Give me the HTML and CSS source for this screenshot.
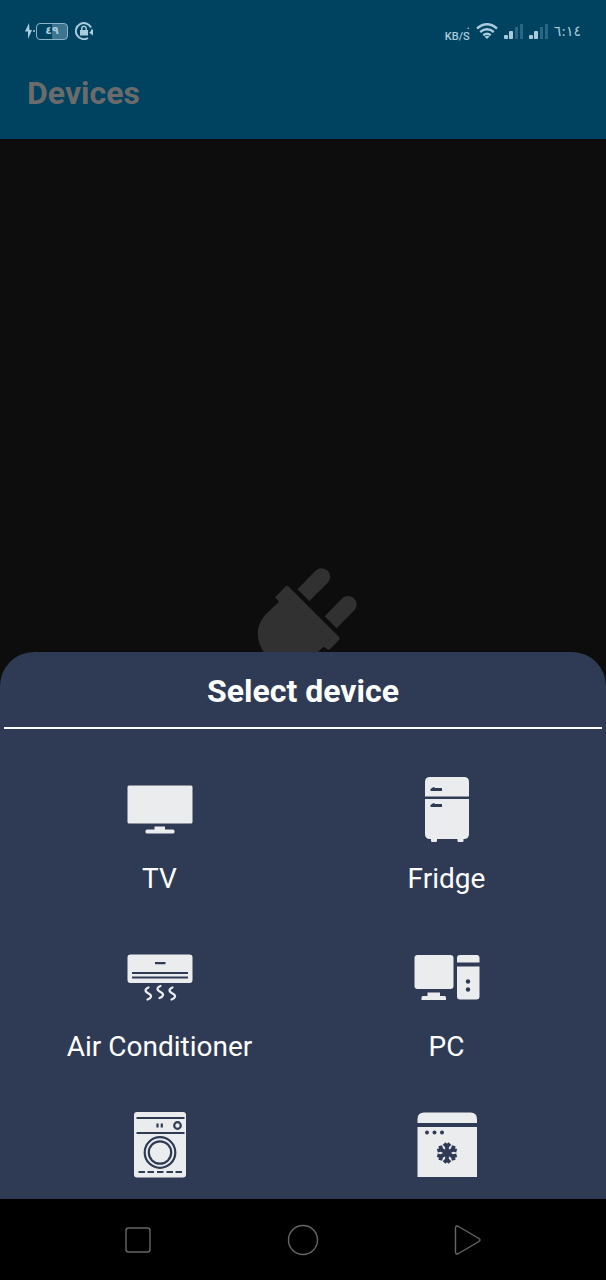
FILE: index.html
```html
<!DOCTYPE html>
<html lang="en">
<head>
<meta charset="utf-8">
<meta name="viewport" content="width=device-width, initial-scale=1">
<title>Devices</title>
<link rel="stylesheet" href="styles.css">
</head>
<body>
<div class="screen">
  <header class="top">
    <div class="status">
      <div class="status-group">
        <svg class="bolt" width="12" height="18" viewBox="0 0 12 18"><path d="M5 1 L1 9.5 H4 L4 17 L8 8 H5.500Z"/><circle cx="10" cy="9" r="1"/></svg>
        <span class="battery">٤٩</span>
        <svg class="lock" width="18" height="18" viewBox="0 0 18 18"><path class="arc" d="M13 16 A8 8 0 1 1 16 5.500"/><path class="arc" d="M17 7.500V11.500L14.800 10"/><path d="M5 8h8v5.500H5z"/><path class="arc thin" d="M6.800 8V6.500a2.200 2.200 0 0 1 4.400 0V8"/></svg>
      </div>
      <div class="status-group right">
        <span class="speed"><span>.</span><span>KB/S</span></span>
        <svg class="wifi" width="22" height="17" viewBox="0 0 22 17"><path d="M1 5.500Q11-2.800 21 5.500M4.200 9Q11 3.500 17.800 9M7.300 12.200Q11 9.300 14.700 12.200"/><path class="fill" d="M8.500 13.500Q11 12 13.500 13.500L11 16Z"/></svg>
        <svg class="signal" width="19" height="16" viewBox="0 0 19 16"><rect y="12" width="4" height="4" rx="1"/><rect x="5" y="8" width="4" height="8" rx="1"/><path class="weak" d="M11 4h3v12h-3zM16 1h3v15h-3z"/></svg>
        <svg class="signal" width="19" height="16" viewBox="0 0 19 16"><rect y="12" width="4" height="4" rx="1"/><rect x="5" y="8" width="4" height="8" rx="1"/><path class="weak" d="M11 4h3v12h-3zM16 1h3v15h-3z"/></svg>
        <time class="clock">٦:١٤</time>
      </div>
    </div>
    <h1 class="title">Devices</h1>
  </header>

  <main class="content">
    <svg class="plug" width="110" height="202" viewBox="248 568 110 202">
      <path d="M297.500 589.300L315.700 570.500A8.600 8.600 0 0 1 328 582.500L309.300 601ZM324.700 616.300L343 597.500A8.600 8.600 0 0 1 355 609.500L336.700 628.300Z"/>
      <path d="M285.500 586.500Q287 585 288.500 586.500L339 637Q340.200 638.700 339 640L329 650L323.300 646.700L315 655Q285 675 265 654Q250 632 266 614L279 601.700L275 597.300Z"/>
      <path class="cord" d="M268 656Q250 690 280 700T290 760"/>
    </svg>

    <section class="sheet" aria-labelledby="sheet-title">
      <h2 class="sheet-title" id="sheet-title">Select device</h2>
      <div class="devices">
        <button class="device" type="button">
          <svg class="icon" viewBox="0 0 66 66"><rect x=".5" y="9.500" width="65" height="38" rx="1.500"/><path d="M27.500 50.500h10.500v4H27.500z"/><rect x="18.500" y="53.500" width="29" height="4" rx="1.500"/></svg>
          <span>TV</span>
        </button>
        <button class="device" type="button">
          <svg class="icon" viewBox="0 0 66 66"><path d="M11 20.500V6q0-5 5-5h34q5 0 5 5v14.500zM11 23h44v35q0 5-5 5H16q-5 0-5-5z"/><path d="M17 62h6v3q0 1-1 1h-4q-1 0-1-1zM43.500 62h6v3q0 1-1 1h-4q-1 0-1-1z"/><path class="cut" d="M16.500 15v-2l3-2 2 1h6.500v3zM16.500 31v-2l3-2 2 1h6.500v3z"/></svg>
          <span>Fridge</span>
        </button>
        <button class="device" type="button">
          <svg class="icon" viewBox="0 0 66 66"><rect x=".5" y="10.500" width="65" height="28.500" rx="3"/><path class="line" d="M28 19.200h10.500M5 29h56M5 33.500h56"/><path class="steam" d="M21.500 43.500c-4 1.500-4 4 0 6s3 4.500-1 6M33.500 42c-4 1.500-4 4 0 6s3 4.500-1 6M45.500 43.500c-4 1.500-4 4 0 6s3 4.500-1 6"/></svg>
          <span>Air Conditioner</span>
        </button>
        <button class="device" type="button">
          <svg class="icon" viewBox="0 0 66 66"><rect x=".5" y="11" width="39" height="34" rx="3"/><path d="M13.500 48.500h12.500v3.500h4.500q1.500 0 1.500 1.500v2.500H7.500v-2.500q0-1.500 1.500-1.500h4.500z"/><path d="M43 18.500V14q0-3 3-3h16.500q3 0 3 3v4.500zM43 22.500h22.500v30q0 3-3 3H46q-3 0-3-3z"/><circle class="cut" cx="54" cy="37.500" r="2.200"/><circle class="cut" cx="54" cy="45.500" r="2.200"/></svg>
          <span>PC</span>
        </button>
        <button class="device" type="button" aria-label="Washing machine">
          <svg class="icon" viewBox="0 0 66 66"><rect x="7" y="0" width="52" height="65.500" rx="3"/><path class="line" d="M9.500 6h48M9.500 21h48M30.500 11.500v4M34.800 11.500v4"/><circle class="line" cx="50.500" cy="13.500" r="3.300"/><circle class="line" cx="33" cy="40.500" r="15.300"/><circle class="line" cx="33" cy="40.500" r="11.200"/><path class="line" d="M11.500 60h6.500M20.500 60H27M30 60h6.500M39.500 60H46M48.500 60H55"/></svg>
        </button>
        <button class="device" type="button" aria-label="Freezer">
          <svg class="icon" viewBox="0 0 66 66"><path d="M3.500 11V7q0-6.500 6.500-6.500h46.500q6.500 0 6.500 6.500v4zM3.500 15H63v50H3.500z"/><circle class="cut" cx="13" cy="20.500" r="2"/><circle class="cut" cx="20.500" cy="20.500" r="2"/><circle class="cut" cx="28" cy="20.500" r="2"/>
            <g class="flake" transform="translate(33 41)"><path id="arm" d="M0 0V-9.500M-2.900-9.500L0-6.500 2.900-9.500"/><use href="#arm" transform="rotate(60)"/><use href="#arm" transform="rotate(120)"/><use href="#arm" transform="rotate(180)"/><use href="#arm" transform="rotate(240)"/><use href="#arm" transform="rotate(300)"/></g></svg>
        </button>
      </div>
    </section>
  </main>

  <nav class="nav">
    <button type="button" aria-label="Recent apps"><svg width="32" height="32" viewBox="0 0 32 32"><rect x="4" y="4" width="24" height="24" rx="2.500"/></svg></button>
    <button type="button" aria-label="Home"><svg width="32" height="32" viewBox="0 0 32 32"><circle cx="16" cy="16" r="14.500"/></svg></button>
    <button type="button" aria-label="Back"><svg width="32" height="32" viewBox="0 0 32 32"><path d="M3.500 4v24q0 3 3 1.500l20.500-12q2-1.500 0-3L6.500 2.500q-3-1.500-3 1.500z"/></svg></button>
  </nav>
</div>
</body>
</html>
```

FILE: styles.css
```css
* { box-sizing: border-box; }

body {
  margin: 0;
  background: #000;
  color: #fff;
  font-family: Roboto, "Noto Sans", sans-serif;
}

button {
  padding: 0;
  border: 0;
  background: none;
  color: inherit;
  font: inherit;
}

.screen {
  display: flex;
  flex-direction: column;
  min-height: 100vh;
}

.top {
  padding-bottom: 26px;
  background: #004361;
}

.status {
  display: flex;
  justify-content: space-between;
  align-items: center;
  height: 62px;
  padding: 0 25px 0 24px;
  color: #a9cbdc;
}

.status svg { fill: #a9cbdc; }

.status-group {
  display: flex;
  align-items: center;
}

.battery {
  width: 32px;
  height: 17px;
  margin-right: 7px;
  border: 1px solid #8bb4c8;
  border-radius: 4px;
  background: linear-gradient(90deg, transparent 50%, #3d7590 50%);
  font: 700 11px/14px "DejaVu Sans", sans-serif;
  text-align: center;
}

.status .lock .arc {
  fill: none;
  stroke: #a9cbdc;
  stroke-width: 2;
}

.status .lock .thin { stroke-width: 1.5; }

.right { gap: 6px; }

.speed {
  display: flex;
  flex-direction: column;
  align-items: flex-end;
  font-size: 11px;
  line-height: 11px;
  font-weight: 500;
}

.status .wifi {
  fill: none;
  stroke: #a9cbdc;
  stroke-width: 2.4;
}

.status .wifi .fill {
  fill: #a9cbdc;
  stroke: none;
}

.signal .weak { fill: #286682; }

.clock { font: 14px/20px "DejaVu Sans", sans-serif; }

.title {
  margin: 11px 27px 0;
  color: #6b6b6b;
  font-size: 32px;
  line-height: 40px;
  font-weight: 700;
}

.content {
  position: relative;
  flex: 1;
  display: grid;
  place-items: center;
  background: #0d0d0d;
}

.plug { fill: #313131; }

.cord {
  fill: none;
  stroke: #313131;
  stroke-width: 8;
}

.sheet {
  position: absolute;
  right: 0;
  bottom: 0;
  left: 0;
  padding: 0 4px 21px;
  border-radius: 34px 34px 0 0;
  background: #2f3b54;
}

.sheet-title {
  margin: 0;
  padding: 19px 0 16px;
  border-bottom: 2px solid #fff;
  font-size: 32px;
  line-height: 40px;
  font-weight: 700;
  text-align: center;
}

.devices {
  display: grid;
  grid-template-columns: 1fr 1fr;
  row-gap: 47px;
  padding: 47px 12px 0;
}

.device {
  display: flex;
  flex-direction: column;
  align-items: center;
  gap: 19px;
  font-size: 28px;
  line-height: 36px;
}

.icon {
  width: 66px;
  height: 66px;
  fill: #ebecee;
}

.icon .cut { fill: #2f3b54; }

.icon .line,
.icon .flake {
  fill: none;
  stroke: #2f3b54;
  stroke-width: 2.2;
}

.icon .flake { stroke-width: 3.8; }

.icon .steam {
  fill: none;
  stroke: #ebecee;
  stroke-width: 2.2;
  stroke-linecap: round;
}

.nav {
  display: flex;
  height: 81px;
  padding: 0 56px;
}

.nav button {
  flex: 1;
  display: grid;
  place-items: center;
}

.nav svg {
  fill: none;
  stroke: #666;
  stroke-width: 1.4;
}
```
